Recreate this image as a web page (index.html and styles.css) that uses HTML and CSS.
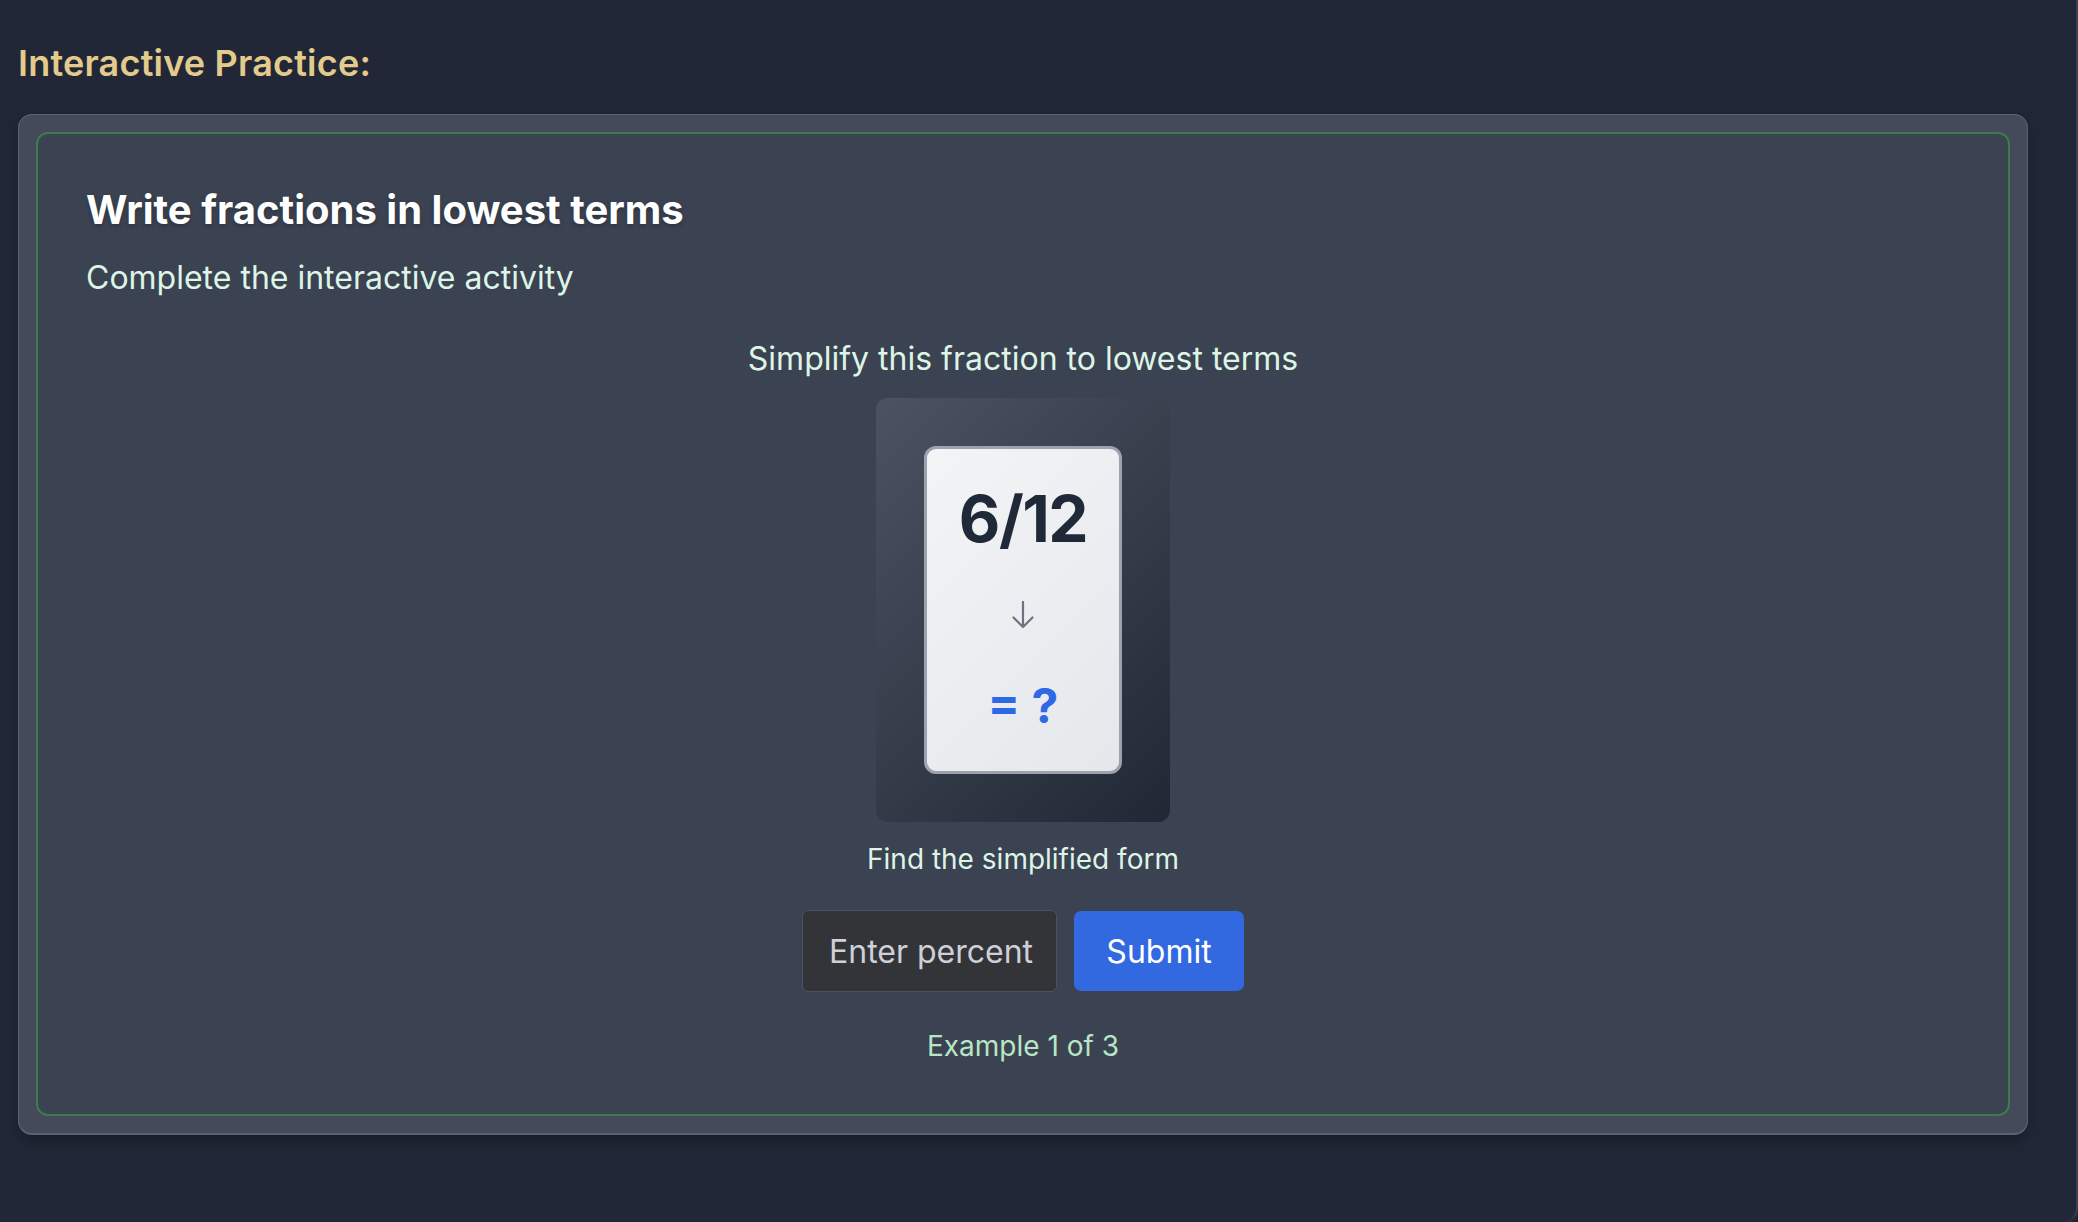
FILE: index.html
```html
<!DOCTYPE html>
<html lang="en">
<head>
<meta charset="utf-8">
<title>Interactive Practice</title>
<link rel="stylesheet" href="styles.css">
</head>
<body>
<div class="page">
  <h2 class="section-title">Interactive Practice:</h2>
  <div class="outer-card">
    <div class="activity">
      <h3 class="activity-title">Write fractions in lowest terms</h3>
      <p class="activity-sub">Complete the interactive activity</p>
      <div class="exercise">
        <p class="prompt">Simplify this fraction to lowest terms</p>
        <div class="visual">
          <div class="fraction-card">
            <div class="fraction">6/12</div>
            <svg class="arrow" width="24" height="28" viewBox="0 0 24 28" aria-hidden="true">
              <path d="M12 1 V26 M2.5 16.5 L12 26 L21.5 16.5" fill="none" stroke="#6b7280" stroke-width="2.2" stroke-linecap="round" stroke-linejoin="round"/>
            </svg>
            <div class="answer">= ?</div>
          </div>
        </div>
        <p class="hint">Find the simplified form</p>
        <div class="answer-row">
          <input class="answer-input" type="text" placeholder="Enter percent">
          <button class="submit-btn" type="button">Submit</button>
        </div>
        <p class="progress">Example 1 of 3</p>
      </div>
    </div>
  </div>
</div>
</body>
</html>
```

FILE: styles.css
```css
html, body {
  margin: 0;
  padding: 0;
  background: #212736;
}

body {
  font-family: Inter, "Noto Sans", "Liberation Sans", sans-serif;
  color: #ffffff;
}

.page {
  box-sizing: border-box;
  min-height: 100vh;
  padding: 41px 48px 0 18px;
  border-right: 2px solid #394050;
  border-bottom-right-radius: 14px;
}

.section-title {
  margin: 0;
  font-size: 36px;
  font-weight: 600;
  letter-spacing: 0.2px;
  line-height: 44px;
  color: #e3cb8c;
}

.outer-card {
  margin-top: 29px;
  box-sizing: border-box;
  padding: 17px;
  background: #444a59;
  border: 1px solid #5c6271;
  border-bottom-width: 2px;
  border-radius: 14px;
  box-shadow: 0 6px 14px rgba(0, 0, 0, 0.25);
}

.activity {
  box-sizing: border-box;
  background: #3b4252;
  border: 2px solid #3f7a51;
  border-radius: 12px;
  padding: 53px 48px 52px 48px;
}

.activity-title {
  margin: 0;
  font-size: 40px;
  font-weight: 700;
  line-height: 45px;
  color: #ffffff;
  text-shadow: 0 2px 4px rgba(0, 0, 0, 0.25);
}

.activity-sub {
  margin: 28px 0 0;
  font-size: 32px;
  line-height: 35px;
  color: #dcf5e6;
}

.exercise {
  display: flex;
  flex-direction: column;
  align-items: center;
  margin-top: 46px;
}

.prompt {
  margin: 0;
  font-size: 32px;
  line-height: 35px;
  color: #dcf5e6;
}

.visual {
  margin-top: 22px;
  box-sizing: border-box;
  width: 294px;
  height: 424px;
  padding: 48px;
  border-radius: 12px;
  background: linear-gradient(135deg, #4b5363 0%, #363d4b 50%, #212835 100%);
}

.fraction-card {
  box-sizing: border-box;
  width: 198px;
  height: 328px;
  border: 3px solid #9ca3af;
  border-radius: 12px;
  background: linear-gradient(135deg, #f3f4f6, #e5e7eb);
  display: flex;
  flex-direction: column;
  align-items: center;
  padding-top: 38px;
}

.fraction {
  font-size: 64px;
  font-weight: 700;
  letter-spacing: -1.5px;
  line-height: 64px;
  color: #1f2937;
}

.arrow {
  display: block;
  margin-top: 50px;
}

.answer {
  margin-top: 53px;
  font-size: 48px;
  font-weight: 700;
  line-height: 48px;
  color: #2f68e6;
}

.hint {
  margin: 21px 0 0;
  font-size: 28px;
  line-height: 32px;
  color: #dcf5e6;
}

.answer-row {
  display: flex;
  align-items: center;
  gap: 17px;
  margin-top: 35px;
}

.answer-input {
  box-sizing: border-box;
  width: 255px;
  height: 82px;
  padding: 0 0 0 26px;
  background: #333438;
  border: 1.5px solid #4b5262;
  border-radius: 6px;
  font-family: Inter, "Noto Sans", "Liberation Sans", sans-serif;
  font-size: 32px;
  color: #ffffff;
  outline: none;
}

.answer-input::placeholder {
  color: #cfcfd8;
  opacity: 1;
}

.submit-btn {
  box-sizing: border-box;
  width: 170px;
  height: 80px;
  border: none;
  border-radius: 7px;
  background: #3268e0;
  color: #ffffff;
  font-family: Inter, "Noto Sans", "Liberation Sans", sans-serif;
  font-size: 32px;
  cursor: pointer;
}

.progress {
  margin: 38px 0 0;
  font-size: 28px;
  line-height: 32px;
  color: #b6e6c6;
}
```
